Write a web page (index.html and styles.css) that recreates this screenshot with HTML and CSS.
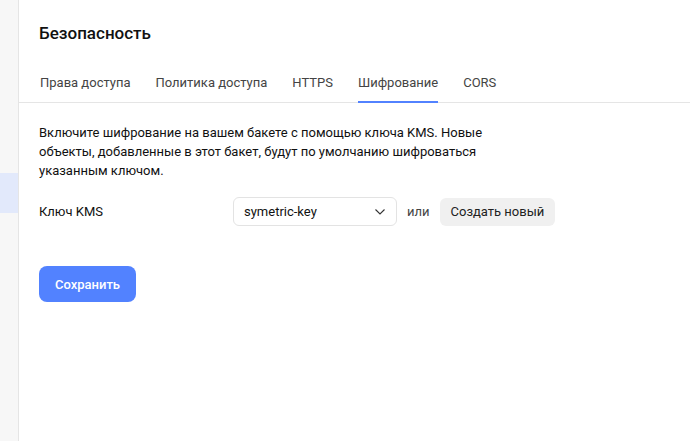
FILE: index.html
```html
<!DOCTYPE html>
<html lang="ru">
<head>
<meta charset="utf-8">
<link rel="stylesheet" href="styles.css">
</head>
<body>
<div class="layout">
  <aside class="sidebar">
    <div class="side-item active"></div>
  </aside>
  <main class="content">
    <h1 class="title">Безопасность</h1>
    <nav class="tabs">
      <span class="tab">Права доступа</span>
      <span class="tab">Политика доступа</span>
      <span class="tab">HTTPS</span>
      <span class="tab selected">Шифрование</span>
      <span class="tab">CORS</span>
    </nav>
    <section class="panel">
      <p class="desc">Включите шифрование на вашем бакете с помощью ключа KMS. Новые объекты, добавленные в этот бакет, будут по умолчанию шифроваться указанным ключом.</p>
      <div class="field">
        <span class="label">Ключ KMS</span>
        <div class="control">
          <div class="select">
            <span>symetric-key</span>
            <svg class="chevron" width="12" height="8" viewBox="0 0 12 8"><path d="M1.5 1.5l4.5 4.5 4.5-4.5" fill="none" stroke="#333" stroke-width="1.1"/></svg>
          </div>
          <span class="or">или</span>
          <button class="btn-secondary">Создать новый</button>
        </div>
      </div>
      <button class="btn-primary">Сохранить</button>
    </section>
  </main>
</div>
</body>
</html>
```
FILE: styles.css
```css
* { box-sizing: border-box; }
html, body { margin: 0; padding: 0; background: #fff; }
body {
  font-family: Roboto, "Noto Sans", sans-serif;
  font-size: 13px;
  color: #000;
  width: 690px;
  height: 441px;
  overflow: hidden;
}
.layout { display: flex; height: 441px; }
.sidebar {
  width: 19px;
  flex: none;
  background: #f7f7f7;
  border-right: 1px solid #e5e5e5;
  padding-top: 173px;
}
.side-item.active { height: 40px; background: #e2e9fb; }
.content { flex: 1; min-width: 0; }
.title {
  margin: 0;
  padding: 22px 0 0 20px;
  font-size: 17px;
  font-weight: 500;
  line-height: 22px;
  color: #111;
}
.tabs {
  display: flex;
  gap: 25px;
  margin-top: 25px;
  padding-left: 21px;
  border-bottom: 1px solid #e5e5e5;
  height: 34px;
}
.tab {
  color: #444;
  font-size: 13px;
  line-height: 18px;
  padding-top: 5px;
}
.tab.selected { border-bottom: 2px solid #5282ff; margin-bottom: -1px; }
.panel { padding: 20px 20px 0 20px; }
.desc {
  margin: 0;
  max-width: 450px;
  line-height: 19px;
  color: #111;
}
.field {
  display: flex;
  align-items: center;
  margin-top: 17px;
}
.label { width: 194px; color: #111; }
.control { display: flex; align-items: center; }
.select {
  width: 164px;
  height: 29px;
  border: 1px solid #e3e3e3;
  border-radius: 6px;
  display: flex;
  align-items: center;
  justify-content: space-between;
  padding: 0 10px 0 10px;
  color: #111;
}
.or { margin: 0 10px; color: #444; }
.btn-secondary {
  height: 28px;
  border: none;
  border-radius: 6px;
  background: #f0f0f0;
  padding: 0 11px;
  font: inherit;
  color: #222;
}
.btn-primary {
  margin-top: 40px;
  height: 36px;
  width: 97px;
  border: none;
  border-radius: 8px;
  background: #5282ff;
  color: #fff;
  font: inherit;
  font-weight: 500;
}
```
